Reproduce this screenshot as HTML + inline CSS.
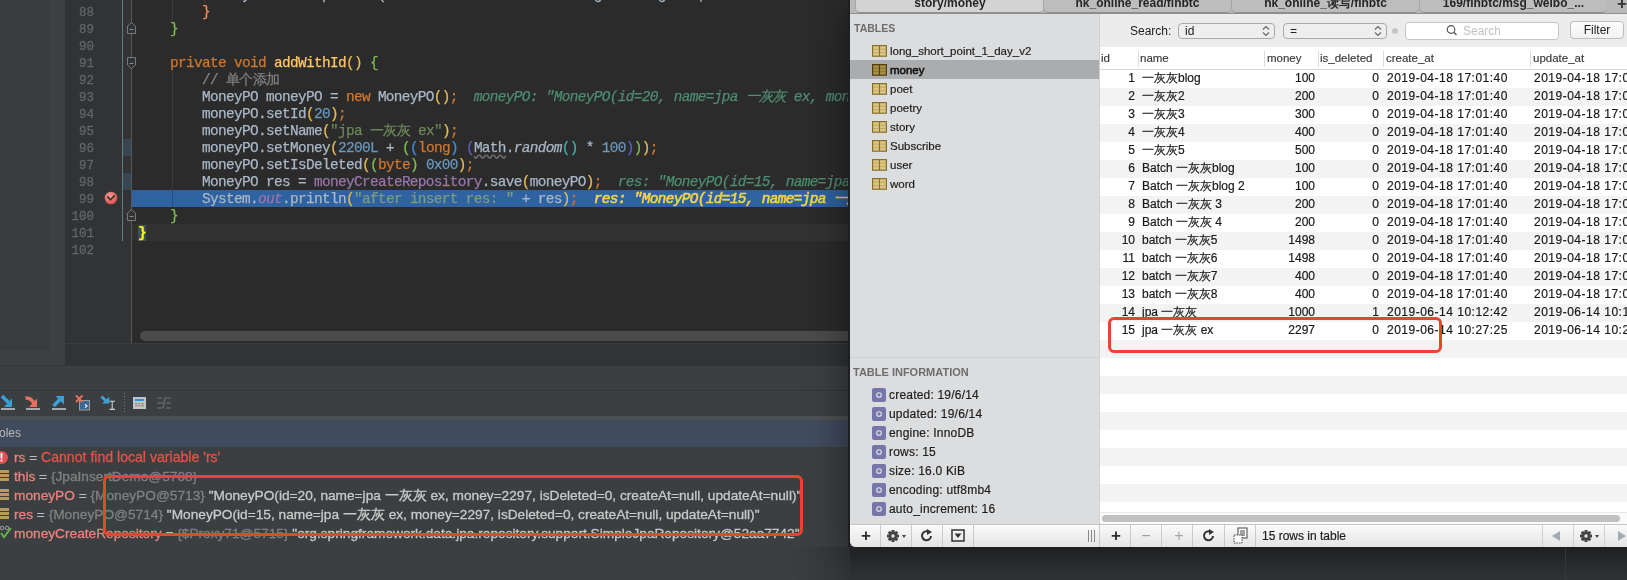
<!DOCTYPE html><html><head><meta charset="utf-8"><style>
*{margin:0;padding:0;box-sizing:border-box}
html,body{width:1627px;height:580px;overflow:hidden;background:#3c3f41;position:relative;font-family:"Liberation Sans",sans-serif}
#root{position:absolute;left:0;top:0;width:1627px;height:580px;will-change:transform}
.a{position:absolute}
#lpanel{left:0;top:0;width:66px;height:365px;background:#3d4042;border-right:1px solid #2f3133}
#lpanel-in{left:0;top:0;width:51px;height:351px;background:#393c3e;border-right:1px solid #3f4244;border-bottom:1px solid #3f4244}
#gutter{left:66px;top:0;width:66px;height:343px;background:#313335}
#editor{left:132px;top:0;width:718px;height:343px;background:#2b2b2b;overflow:hidden}
#below{left:66px;top:343px;width:784px;height:22px;background:#313335;border-top:1px solid #3b3d3f}
.ln{position:absolute;left:66px;width:28px;text-align:right;font-family:"Liberation Mono",monospace;font-size:12.5px;color:#626568;line-height:17px;height:17px;padding-top:2px;-webkit-text-stroke:0.3px}
.code{position:absolute;left:6px;font-family:"Liberation Mono",monospace;font-size:14.4px;letter-spacing:-0.64px;-webkit-text-stroke:0.25px;line-height:17px;height:17px;white-space:pre;color:#a9b7c6}
.kw{color:#cc7832}.fn{color:#ffc66d}.cm{color:#808080}.st{color:#6a8759}.st2{color:#7d9a86}.nu{color:#6897bb}
.pu{color:#9876aa;font-style:italic}.pu2{color:#9876aa}
.it{font-style:italic}
.wavy{text-decoration:underline wavy #707070;text-underline-offset:2px}
.hint{color:#4f8c72;font-style:italic}
.hint2{color:#f0d44a;font-style:italic;-webkit-text-stroke:0.6px}
.b1{color:#e8ba54}.b2{color:#7fbf4d}.b3{color:#f08c50}.b4{color:#3fb2a6}.b6{color:#3d8ed6}.b7{color:#5b5fc7}
.mb{background:#3b514d;color:#ffef28;font-weight:bold}

.vr{left:14px;height:19px;line-height:19px;font-size:13.7px;color:#bbbbbb;white-space:pre;-webkit-text-stroke:0.3px}
.vn{color:#e8837e}.ve{color:#e5524a;font-size:14.1px}.vg{color:#808080}.vw{color:#c9c9c9}

#sq{left:850px;top:0;width:790px;height:547px;background:#ececec;border-bottom-left-radius:6px;overflow:hidden}
.tab{position:absolute;top:-6px;height:19px;padding-top:1.5px;background:#c0c0c0;border-left:1px solid #a6a6a6;border-bottom:1px solid #8f8f8f;border-radius:0 0 5px 5px;font-size:12px;font-weight:bold;color:#262626;text-align:center;line-height:14px;white-space:nowrap;overflow:hidden}
.tbl{position:absolute;left:22px;font-size:11.5px;color:#1e1e1e;height:19px;line-height:19px;white-space:pre;-webkit-text-stroke:0.2px}
.ti{position:absolute;left:22px;font-size:12px;color:#1e1e1e;height:19px;line-height:19px;white-space:pre;-webkit-text-stroke:0.2px;letter-spacing:0.2px}
.row{position:absolute;left:250px;width:540px;height:18px}
.cell{position:absolute;top:0;height:18px;line-height:18px;font-size:12px;color:#1a1a1a;white-space:pre;-webkit-text-stroke:0.2px}
.hd{position:absolute;top:48px;height:21px;line-height:21px;font-size:11.5px;color:#383838;white-space:pre;-webkit-text-stroke:0.15px}
.sep{position:absolute;top:51px;width:1px;height:16px;background:#dcdcdc}
.dt{letter-spacing:0.5px}</style></head><body><div id="root"><div class="a" id="lpanel"></div><div class="a" id="lpanel-in"></div><div class="a" id="gutter"></div><div class="a" id="editor"><div class="a" style="left:0;top:224px;width:718px;height:17px;background:#323232"></div><div class="a" style="left:0;top:190px;width:718px;height:17px;background:#2e62a0"></div><div class="a" style="left:40px;top:71px;width:1px;height:136px;background:#3b3b3b"></div><div class="a" style="left:40px;top:190px;width:1px;height:17px;background:#244e80"></div><div class="a" style="left:40px;top:0px;width:1px;height:20px;background:#3b3b3b"></div><div class="a" style="left:72px;top:0px;width:1px;height:3px;background:#3b3b3b"></div><div class="code" style="top:-13px">            System.out.println(aaaaaaaaaaaaaaaaaaaaaaaaaagaaaaaaaga...;</div><div class="code" style="top:4px">        <span class="b3">}</span></div><div class="code" style="top:21px">    <span class="b2">}</span></div><div class="code" style="top:55px">    <span class="kw">private void </span><span class="fn">addWithId</span><span class="b1">()</span> <span class="b2">{</span></div><div class="code" style="top:72px">        <span class="cm">// 单个添加</span></div><div class="code" style="top:89px">        MoneyPO moneyPO = <span class="kw">new </span>MoneyPO<span class="b1">()</span><span class="kw">;</span>  <span class="hint">moneyPO: "MoneyPO(id=20, name=jpa 一灰灰 ex, money=2297, isDeleted=0, createAt=null, updateAt=null)"</span></div><div class="code" style="top:106px">        moneyPO.setId<span class="b1">(</span><span class="nu">20</span><span class="b1">)</span><span class="kw">;</span></div><div class="code" style="top:123px">        moneyPO.setName<span class="b1">(</span><span class="st">"jpa 一灰灰 ex"</span><span class="b1">)</span><span class="kw">;</span></div><div class="code" style="top:140px">        moneyPO.setMoney<span class="b1">(</span><span class="nu">2200L</span> + <span class="b2">(</span><span class="b6">(</span><span class="kw">long</span><span class="b6">)</span> <span class="b7">(</span><span class="wavy">Math</span>.<span class="it">random</span><span class="b4">()</span> * <span class="nu">100</span><span class="b7">)</span><span class="b2">)</span><span class="b1">)</span><span class="kw">;</span></div><div class="code" style="top:157px">        moneyPO.setIsDeleted<span class="b1">(</span><span class="b2">(</span><span class="kw">byte</span><span class="b2">)</span> <span class="nu">0x00</span><span class="b1">)</span><span class="kw">;</span></div><div class="code" style="top:174px">        MoneyPO res = <span class="pu2">moneyCreateRepository</span>.save<span class="b1">(</span>moneyPO<span class="b1">)</span><span class="kw">;</span>  <span class="hint">res: "MoneyPO(id=15, name=jpa 一灰灰 ex, money=2297, isDeleted=0, createAt=null, updateAt=null)"</span></div><div class="code" style="top:191px">        System.<span class="pu">out</span>.println<span class="b1">(</span><span class="st2">"after insert res: "</span> + res<span class="b1">)</span><span class="kw">;</span>  <span class="hint2">res: "MoneyPO(id=15, name=jpa 一灰灰 ex, money=2297, isDeleted=0, createAt=null, updateAt=null)"</span></div><div class="code" style="top:208px">    <span class="b2">}</span></div><div class="code" style="top:225px"><span class="b1 mb">}</span></div></div><div class="a" id="below"></div><div class="a" style="left:140px;top:331px;width:720px;height:10px;border-radius:5px;background:#494b4d"></div><div class="ln" style="top:3px">88</div><div class="ln" style="top:20px">89</div><div class="ln" style="top:37px">90</div><div class="ln" style="top:54px">91</div><div class="ln" style="top:71px">92</div><div class="ln" style="top:88px">93</div><div class="ln" style="top:105px">94</div><div class="ln" style="top:122px">95</div><div class="ln" style="top:139px">96</div><div class="ln" style="top:156px">97</div><div class="ln" style="top:173px">98</div><div class="ln" style="top:190px">99</div><div class="ln" style="top:207px">100</div><div class="ln" style="top:224px">101</div><div class="ln" style="top:241px">102</div><div class="a" style="left:122px;top:0;width:1px;height:241px;background:#5a7f7c"></div><div class="a" style="left:123px;top:139px;width:8px;height:17px;background:#374650"></div><div class="a" style="left:123px;top:173px;width:8px;height:17px;background:#374650"></div><div class="a" style="left:131px;top:0;width:1px;height:343px;background:#55585a"></div><svg class="a" style="left:127px;top:0" width="10" height="260"><path d="M0.5,33.5 L0.5,26 L4.5,22.5 L8.5,26 L8.5,33.5 Z" fill="#313335" stroke="#77797b" stroke-width="1"/><path d="M2.5,29.5 L6.5,29.5" stroke="#8a8c8e" stroke-width="1"/><path d="M0.5,57.5 L0.5,65 L4.5,68.5 L8.5,65 L8.5,57.5 Z" fill="#313335" stroke="#77797b" stroke-width="1"/><path d="M2.5,63.5 L6.5,63.5" stroke="#8a8c8e" stroke-width="1"/><path d="M0.5,220.5 L0.5,213 L4.5,209.5 L8.5,213 L8.5,220.5 Z" fill="#313335" stroke="#77797b" stroke-width="1"/><path d="M2.5,216.5 L6.5,216.5" stroke="#8a8c8e" stroke-width="1"/></svg><svg class="a" style="left:104px;top:191px" width="14" height="14"><defs><radialGradient id="bp" cx="40%" cy="35%" r="65%"><stop offset="0" stop-color="#f4a09a"/><stop offset="1" stop-color="#d9524c"/></radialGradient></defs><circle cx="7" cy="7" r="6.3" fill="url(#bp)"/><path d="M3.4,5.4 L6.4,8.8 L10.8,4.4" fill="none" stroke="#3d3030" stroke-width="1.6"/></svg><div class="a" style="left:0;top:365px;width:850px;height:25px;background:#3c3f41;border-top:1px solid #333537"></div><div class="a" style="left:0;top:390px;width:850px;height:1px;background:#323436"></div><div class="a" style="left:0;top:391px;width:850px;height:25px;background:#3c3f41"></div><div class="a" style="left:0;top:416px;width:850px;height:4px;background:#4d5052"></div><div class="a" style="left:0;top:420px;width:850px;height:27px;background:#404b5d"></div><div class="a" style="left:-1px;top:424px;height:18px;line-height:18px;font-size:12px;color:#bbbbbb;white-space:pre">oles</div><div class="a" style="left:0;top:447px;width:850px;height:133px;background:#3c3f41"></div><svg class="a" style="left:0;top:449px" width="14" height="90"><circle cx="1.5" cy="8.5" r="6.5" fill="#e0534f"/><rect x="0.6" y="4" width="1.8" height="5.5" fill="#fff"/><rect x="0.6" y="10.6" width="1.8" height="1.8" fill="#fff"/><rect x="0" y="21" width="9" height="3" fill="#b89a5e"/><rect x="0" y="25" width="9" height="3" fill="#b89a5e"/><rect x="0" y="29" width="9" height="3" fill="#b89a5e"/><rect x="0" y="40" width="9" height="3" fill="#b89a5e"/><rect x="0" y="44" width="9" height="3" fill="#b89a5e"/><rect x="0" y="48" width="9" height="3" fill="#b89a5e"/><rect x="0" y="59" width="9" height="3" fill="#b89a5e"/><rect x="0" y="63" width="9" height="3" fill="#b89a5e"/><rect x="0" y="67" width="9" height="3" fill="#b89a5e"/><circle cx="2" cy="79" r="1.8" fill="none" stroke="#aaa" stroke-width="0.9"/><circle cx="7" cy="79" r="1.8" fill="none" stroke="#aaa" stroke-width="0.9"/><path d="M1,84 L4,88 L11,79" fill="none" stroke="#62b543" stroke-width="2"/></svg><div class="a vr" style="top:448px"><span class="vn">rs</span> = <span class="ve">Cannot find local variable 'rs'</span></div><div class="a vr" style="top:467px"><span class="vn">this</span> = <span class="vg">{JpaInsertDemo@5708}</span></div><div class="a vr" style="top:486px"><span class="vn">moneyPO</span> = <span class="vg">{MoneyPO@5713}</span><span class="vw"> "MoneyPO(id=20, name=jpa 一灰灰 ex, money=2297, isDeleted=0, createAt=null, updateAt=null)"</span></div><div class="a vr" style="top:505px"><span class="vn">res</span> = <span class="vg">{MoneyPO@5714}</span><span class="vw"> "MoneyPO(id=15, name=jpa 一灰灰 ex, money=2297, isDeleted=0, createAt=null, updateAt=null)"</span></div><div class="a vr" style="top:524px"><span class="vn">moneyCreateRepository</span> = <span class="vg">{$Proxy71@5715}</span><span class="vw"> "org.springframework.data.jpa.repository.support.SimpleJpaRepository@52aa7742"</span></div><div class="a" style="left:103px;top:475px;width:700px;height:61px;border:3px solid #e8442e;border-radius:6px"></div><svg class="a" style="left:0;top:391px" width="180" height="25"><path d="M2,5 L8.5,11.5" stroke="#3d9fd8" stroke-width="3.6" fill="none"/><path d="M4,16 L12,16 L12,7.5 Z" fill="#3d9fd8"/><rect x="1" y="17" width="14" height="2" fill="#a8a8a8"/><path d="M25.5,7 Q31,6.5 34,12.5" stroke="#e8705e" stroke-width="3.4" fill="none"/><path d="M29,16 L37,16 L37,7.5 Z" fill="#e8705e"/><rect x="26" y="17" width="14" height="2" fill="#a8a8a8"/><path d="M53.5,15 L60,8.5" stroke="#3d9fd8" stroke-width="3.6" fill="none"/><path d="M55.5,5 L64,5 L64,13.5 Z" fill="#3d9fd8"/><rect x="52" y="17" width="14" height="2" fill="#a8a8a8"/><rect x="79.5" y="9.5" width="10" height="9.5" fill="#3a6890" stroke="#9a9a9a" stroke-width="1"/><path d="M85,13.5 L87,15 L85,16.5" stroke="#fff" stroke-width="1.1" fill="none"/><path d="M76,4.5 L82.5,11 M82.5,4.5 L76,11" stroke="#e8705e" stroke-width="1.8"/><path d="M101.5,5.5 L106.5,10.5" stroke="#3d9fd8" stroke-width="3" fill="none"/><path d="M102,12.5 L109.3,12.5 L109.3,5.8 Z" fill="#3d9fd8"/><path d="M109.5,10.3 L115,10.3 M112.2,10.3 L112.2,18.4 M109.5,18.4 L115,18.4" stroke="#d0d0d0" stroke-width="1.1"/><rect x="124" y="2" width="1" height="1" fill="#7a7a7a"/><rect x="124" y="5" width="1" height="1" fill="#7a7a7a"/><rect x="124" y="8" width="1" height="1" fill="#7a7a7a"/><rect x="124" y="11" width="1" height="1" fill="#7a7a7a"/><rect x="124" y="14" width="1" height="1" fill="#7a7a7a"/><rect x="124" y="17" width="1" height="1" fill="#7a7a7a"/><rect x="124" y="20" width="1" height="1" fill="#7a7a7a"/><rect x="133" y="6" width="13" height="12" fill="#c0c4c8"/><rect x="135" y="8" width="9" height="2" fill="#3a8fd0"/><rect x="135.2" y="12" width="2" height="1.2" fill="#8a8a8a"/><rect x="138.3" y="12" width="2" height="1.2" fill="#8a8a8a"/><rect x="141.3" y="12" width="2.6" height="1.2" fill="#c87a7a"/><rect x="135.2" y="14" width="2" height="1.2" fill="#8a8a8a"/><rect x="138.3" y="14" width="2" height="1.2" fill="#8a8a8a"/><rect x="141.3" y="14" width="2.6" height="1.4" fill="#4cb84c"/><path d="M157,7 L162,7 M157,12 L163,12 M157,17 L163,17 M166,7 L171,7 M166,12 L171,12 M166,17 L171,17 M163,17 L165,7 L166,7" stroke="#5f6163" stroke-width="1.7" fill="none"/></svg><div class="a" style="left:850px;top:0;width:800px;height:547px;border-bottom-left-radius:6px;box-shadow:0 10px 36px 4px rgba(0,0,0,.45)"></div><div class="a" style="left:850px;top:547px;width:777px;height:33px;background:linear-gradient(#1e1f21,#2b2c2f 60%,#303134)"></div><div class="a" style="left:1565px;top:547px;width:1px;height:33px;background:#36373a"></div><div class="a" style="left:790px;top:547px;width:60px;height:33px;background:linear-gradient(to right,rgba(31,32,34,0),rgba(31,32,34,.35))"></div><div class="a" id="sq"><div class="a" style="left:0;top:0;width:790px;height:14px;background:#b9b9b9;border-bottom:1px solid #8d8d8d"></div><div class="tab" style="left:5px;width:189px;background:#d3d3d3">story/money</div><div class="tab" style="left:193px;width:188px;background:#bdbdbd">hk_online_read/finbtc</div><div class="tab" style="left:381px;width:188px;background:#bdbdbd">hk_online_读写/finbtc</div><div class="tab" style="left:569px;width:188px;background:#bdbdbd">169/finbtc/msg_weibo_...</div><div class="a" style="left:767px;top:-6px;height:18px;font-size:17px;font-weight:bold;color:#333">+</div><div class="a" style="left:0;top:14px;width:249px;height:510px;background:#dcdddf"></div><div class="a" style="left:249px;top:14px;width:1px;height:510px;background:#d2d2d4"></div><div class="a" style="left:4px;top:21px;font-size:10.5px;font-weight:bold;color:#6d6d6d;line-height:14px">TABLES</div><svg class="a" style="left:22px;top:45px" width="16" height="13"><defs><linearGradient id="g0" x1="0" y1="0" x2="0" y2="1"><stop offset="0" stop-color="#dcc47c"/><stop offset="1" stop-color="#dcc47c" stop-opacity="0.85"/></linearGradient></defs><rect x="0.6" y="0.6" width="13.8" height="10.6" fill="url(#g0)" stroke="#86702e" stroke-width="1.2"/><path d="M7.5,0.6 V11.2" stroke="#86702e" stroke-width="1.1"/><path d="M1,4.2 H14 M1,7.7 H14" stroke="#86702e" stroke-opacity="0.35" stroke-width="0.9"/></svg><div class="tbl" style="left:40px;top:42px;">long_short_point_1_day_v2</div><div class="a" style="left:0;top:60px;width:249px;height:18.5px;background:#abacae"></div><svg class="a" style="left:22px;top:64px" width="16" height="13"><defs><linearGradient id="g1" x1="0" y1="0" x2="0" y2="1"><stop offset="0" stop-color="#a88c3c"/><stop offset="1" stop-color="#a88c3c" stop-opacity="0.85"/></linearGradient></defs><rect x="0.6" y="0.6" width="13.8" height="10.6" fill="url(#g1)" stroke="#4e3c12" stroke-width="1.2"/><path d="M7.5,0.6 V11.2" stroke="#4e3c12" stroke-width="1.1"/><path d="M1,4.2 H14 M1,7.7 H14" stroke="#4e3c12" stroke-opacity="0.35" stroke-width="0.9"/></svg><div class="tbl" style="left:40px;top:61px;-webkit-text-stroke:0.55px;color:#111">money</div><svg class="a" style="left:22px;top:83px" width="16" height="13"><defs><linearGradient id="g2" x1="0" y1="0" x2="0" y2="1"><stop offset="0" stop-color="#dcc47c"/><stop offset="1" stop-color="#dcc47c" stop-opacity="0.85"/></linearGradient></defs><rect x="0.6" y="0.6" width="13.8" height="10.6" fill="url(#g2)" stroke="#86702e" stroke-width="1.2"/><path d="M7.5,0.6 V11.2" stroke="#86702e" stroke-width="1.1"/><path d="M1,4.2 H14 M1,7.7 H14" stroke="#86702e" stroke-opacity="0.35" stroke-width="0.9"/></svg><div class="tbl" style="left:40px;top:80px;">poet</div><svg class="a" style="left:22px;top:102px" width="16" height="13"><defs><linearGradient id="g3" x1="0" y1="0" x2="0" y2="1"><stop offset="0" stop-color="#dcc47c"/><stop offset="1" stop-color="#dcc47c" stop-opacity="0.85"/></linearGradient></defs><rect x="0.6" y="0.6" width="13.8" height="10.6" fill="url(#g3)" stroke="#86702e" stroke-width="1.2"/><path d="M7.5,0.6 V11.2" stroke="#86702e" stroke-width="1.1"/><path d="M1,4.2 H14 M1,7.7 H14" stroke="#86702e" stroke-opacity="0.35" stroke-width="0.9"/></svg><div class="tbl" style="left:40px;top:99px;">poetry</div><svg class="a" style="left:22px;top:121px" width="16" height="13"><defs><linearGradient id="g4" x1="0" y1="0" x2="0" y2="1"><stop offset="0" stop-color="#dcc47c"/><stop offset="1" stop-color="#dcc47c" stop-opacity="0.85"/></linearGradient></defs><rect x="0.6" y="0.6" width="13.8" height="10.6" fill="url(#g4)" stroke="#86702e" stroke-width="1.2"/><path d="M7.5,0.6 V11.2" stroke="#86702e" stroke-width="1.1"/><path d="M1,4.2 H14 M1,7.7 H14" stroke="#86702e" stroke-opacity="0.35" stroke-width="0.9"/></svg><div class="tbl" style="left:40px;top:118px;">story</div><svg class="a" style="left:22px;top:140px" width="16" height="13"><defs><linearGradient id="g5" x1="0" y1="0" x2="0" y2="1"><stop offset="0" stop-color="#dcc47c"/><stop offset="1" stop-color="#dcc47c" stop-opacity="0.85"/></linearGradient></defs><rect x="0.6" y="0.6" width="13.8" height="10.6" fill="url(#g5)" stroke="#86702e" stroke-width="1.2"/><path d="M7.5,0.6 V11.2" stroke="#86702e" stroke-width="1.1"/><path d="M1,4.2 H14 M1,7.7 H14" stroke="#86702e" stroke-opacity="0.35" stroke-width="0.9"/></svg><div class="tbl" style="left:40px;top:137px;">Subscribe</div><svg class="a" style="left:22px;top:159px" width="16" height="13"><defs><linearGradient id="g6" x1="0" y1="0" x2="0" y2="1"><stop offset="0" stop-color="#dcc47c"/><stop offset="1" stop-color="#dcc47c" stop-opacity="0.85"/></linearGradient></defs><rect x="0.6" y="0.6" width="13.8" height="10.6" fill="url(#g6)" stroke="#86702e" stroke-width="1.2"/><path d="M7.5,0.6 V11.2" stroke="#86702e" stroke-width="1.1"/><path d="M1,4.2 H14 M1,7.7 H14" stroke="#86702e" stroke-opacity="0.35" stroke-width="0.9"/></svg><div class="tbl" style="left:40px;top:156px;">user</div><svg class="a" style="left:22px;top:178px" width="16" height="13"><defs><linearGradient id="g7" x1="0" y1="0" x2="0" y2="1"><stop offset="0" stop-color="#dcc47c"/><stop offset="1" stop-color="#dcc47c" stop-opacity="0.85"/></linearGradient></defs><rect x="0.6" y="0.6" width="13.8" height="10.6" fill="url(#g7)" stroke="#86702e" stroke-width="1.2"/><path d="M7.5,0.6 V11.2" stroke="#86702e" stroke-width="1.1"/><path d="M1,4.2 H14 M1,7.7 H14" stroke="#86702e" stroke-opacity="0.35" stroke-width="0.9"/></svg><div class="tbl" style="left:40px;top:175px;">word</div><div class="a" style="left:0;top:357px;width:249px;height:1px;background:#cfcfcf"></div><div class="a" style="left:3px;top:365px;font-size:11px;font-weight:bold;color:#6d6d6d;line-height:14px">TABLE INFORMATION</div><svg class="a" style="left:22px;top:388px" width="14" height="14"><rect x="0" y="0" width="14" height="14" rx="2" fill="#7776a8"/><circle cx="7" cy="7" r="2.3" fill="none" stroke="#e4e4f0" stroke-width="1.1"/></svg><div class="ti" style="left:39px;top:386px">created: 19/6/14</div><svg class="a" style="left:22px;top:407px" width="14" height="14"><rect x="0" y="0" width="14" height="14" rx="2" fill="#7776a8"/><circle cx="7" cy="7" r="2.3" fill="none" stroke="#e4e4f0" stroke-width="1.1"/></svg><div class="ti" style="left:39px;top:405px">updated: 19/6/14</div><svg class="a" style="left:22px;top:426px" width="14" height="14"><rect x="0" y="0" width="14" height="14" rx="2" fill="#7776a8"/><circle cx="7" cy="7" r="2.3" fill="none" stroke="#e4e4f0" stroke-width="1.1"/></svg><div class="ti" style="left:39px;top:424px">engine: InnoDB</div><svg class="a" style="left:22px;top:445px" width="14" height="14"><rect x="0" y="0" width="14" height="14" rx="2" fill="#7776a8"/><circle cx="7" cy="7" r="2.3" fill="none" stroke="#e4e4f0" stroke-width="1.1"/></svg><div class="ti" style="left:39px;top:443px">rows: 15</div><svg class="a" style="left:22px;top:464px" width="14" height="14"><rect x="0" y="0" width="14" height="14" rx="2" fill="#7776a8"/><circle cx="7" cy="7" r="2.3" fill="none" stroke="#e4e4f0" stroke-width="1.1"/></svg><div class="ti" style="left:39px;top:462px">size: 16.0 KiB</div><svg class="a" style="left:22px;top:483px" width="14" height="14"><rect x="0" y="0" width="14" height="14" rx="2" fill="#7776a8"/><circle cx="7" cy="7" r="2.3" fill="none" stroke="#e4e4f0" stroke-width="1.1"/></svg><div class="ti" style="left:39px;top:481px">encoding: utf8mb4</div><svg class="a" style="left:22px;top:502px" width="14" height="14"><rect x="0" y="0" width="14" height="14" rx="2" fill="#7776a8"/><circle cx="7" cy="7" r="2.3" fill="none" stroke="#e4e4f0" stroke-width="1.1"/></svg><div class="ti" style="left:39px;top:500px">auto_increment: 16</div><div class="a" style="left:0;top:524px;width:790px;height:23px;background:linear-gradient(#fafafa,#e4e4e4);border-top:1px solid #c6c6c6"></div><div class="a" style="left:30px;top:525px;width:1px;height:22px;background:#c9c9c9"></div><div class="a" style="left:61px;top:525px;width:1px;height:22px;background:#c9c9c9"></div><div class="a" style="left:92px;top:525px;width:1px;height:22px;background:#c9c9c9"></div><div class="a" style="left:123px;top:525px;width:1px;height:22px;background:#c9c9c9"></div><div class="a" style="left:249px;top:525px;width:1px;height:22px;background:#c9c9c9"></div><div class="a" style="left:280px;top:525px;width:1px;height:22px;background:#c9c9c9"></div><div class="a" style="left:311px;top:525px;width:1px;height:22px;background:#c9c9c9"></div><div class="a" style="left:342px;top:525px;width:1px;height:22px;background:#c9c9c9"></div><div class="a" style="left:374px;top:525px;width:1px;height:22px;background:#c9c9c9"></div><div class="a" style="left:8px;top:525px;width:16px;height:22px;font-size:17px;font-weight:bold;color:#2e2e2e;text-align:center;line-height:22px">+</div><div class="a" style="left:258px;top:525px;width:16px;height:22px;font-size:17px;font-weight:bold;color:#2e2e2e;text-align:center;line-height:22px">+</div><div class="a" style="left:288px;top:525px;width:16px;height:22px;font-size:16px;color:#9a9a9a;text-align:center;line-height:22px">−</div><div class="a" style="left:321px;top:525px;width:16px;height:22px;font-size:16px;color:#a8a8a8;text-align:center;line-height:22px">+</div><div class="a" style="left:238px;top:530px;width:7px;height:12px;border-left:1px solid #888;border-right:1px solid #888"></div><div class="a" style="left:241px;top:530px;width:1px;height:12px;background:#888"></div><svg class="a" style="left:37px;top:529px" width="22" height="14"><g transform="translate(6,7)"><rect x="-1.5" y="-6" width="3" height="3" fill="#444" transform="rotate(0)"/><rect x="-1.5" y="-6" width="3" height="3" fill="#444" transform="rotate(45)"/><rect x="-1.5" y="-6" width="3" height="3" fill="#444" transform="rotate(90)"/><rect x="-1.5" y="-6" width="3" height="3" fill="#444" transform="rotate(135)"/><rect x="-1.5" y="-6" width="3" height="3" fill="#444" transform="rotate(180)"/><rect x="-1.5" y="-6" width="3" height="3" fill="#444" transform="rotate(225)"/><rect x="-1.5" y="-6" width="3" height="3" fill="#444" transform="rotate(270)"/><rect x="-1.5" y="-6" width="3" height="3" fill="#444" transform="rotate(315)"/><circle r="4.2" fill="#444"/><circle r="1.7" fill="#eaeaea"/></g><path d="M15,6 L19,6 L17,9 Z" fill="#444"/></svg><svg class="a" style="left:730px;top:529px" width="22" height="14"><g transform="translate(6,7)"><rect x="-1.5" y="-6" width="3" height="3" fill="#444" transform="rotate(0)"/><rect x="-1.5" y="-6" width="3" height="3" fill="#444" transform="rotate(45)"/><rect x="-1.5" y="-6" width="3" height="3" fill="#444" transform="rotate(90)"/><rect x="-1.5" y="-6" width="3" height="3" fill="#444" transform="rotate(135)"/><rect x="-1.5" y="-6" width="3" height="3" fill="#444" transform="rotate(180)"/><rect x="-1.5" y="-6" width="3" height="3" fill="#444" transform="rotate(225)"/><rect x="-1.5" y="-6" width="3" height="3" fill="#444" transform="rotate(270)"/><rect x="-1.5" y="-6" width="3" height="3" fill="#444" transform="rotate(315)"/><circle r="4.2" fill="#444"/><circle r="1.7" fill="#eaeaea"/></g><path d="M15,6 L19,6 L17,9 Z" fill="#444"/></svg><svg class="a" style="left:70px;top:529px" width="14" height="14"><path d="M11,7 A4.5,4.5 0 1 1 8.5,2.8" fill="none" stroke="#333" stroke-width="2"/><path d="M7,0 L12,3 L7,6 Z" fill="#333"/></svg><svg class="a" style="left:352px;top:529px" width="14" height="14"><path d="M11,7 A4.5,4.5 0 1 1 8.5,2.8" fill="none" stroke="#333" stroke-width="2"/><path d="M7,0 L12,3 L7,6 Z" fill="#333"/></svg><svg class="a" style="left:101px;top:529px" width="14" height="14"><rect x="1" y="1" width="12" height="11" fill="none" stroke="#333" stroke-width="1.5"/><path d="M3.5,4.5 L10.5,4.5 L7,9 Z" fill="#333"/></svg><svg class="a" style="left:383px;top:527px" width="16" height="18"><rect x="5" y="1" width="9" height="10" fill="#fff" stroke="#444"/><path d="M7,4 H12 M7,6 H12 M7,8 H12" stroke="#444"/><rect x="1" y="8" width="8" height="8" fill="#fff" stroke="#444" stroke-dasharray="1.5 1"/></svg><div class="a" style="left:405px;top:524px;width:1px;height:23px;background:#c9c9c9"></div><div class="a" style="left:412px;top:526px;height:20px;line-height:20px;font-size:12px;color:#1e1e1e;-webkit-text-stroke:0.2px">15 rows in table</div><div class="a" style="left:692px;top:525px;width:1px;height:22px;background:#d0d0d0"></div><div class="a" style="left:723px;top:525px;width:1px;height:22px;background:#d0d0d0"></div><div class="a" style="left:754px;top:525px;width:1px;height:22px;background:#d0d0d0"></div><svg class="a" style="left:700px;top:530px" width="12" height="12"><path d="M10,1 L10,11 L2,6 Z" fill="#a3aab4"/></svg><svg class="a" style="left:766px;top:530px" width="12" height="12"><path d="M2,1 L2,11 L10,6 Z" fill="#a3aab4"/></svg><div class="a" style="left:250px;top:14px;width:540px;height:34px;background:#ececec;border-bottom:1px solid #d8d8d8"></div><div class="a" style="left:280px;top:23px;font-size:12px;color:#222;line-height:16px">Search:</div><div class="a" style="left:328px;top:23px;width:97px;height:16px;background:#eeeeee;border:1px solid #aaaaaa;border-radius:4px;font-size:12px;color:#222;line-height:15px;padding-left:6px">id</div><svg class="a" style="left:411px;top:25px" width="10" height="12"><path d="M2,4.5 L5,1.5 L8,4.5 M2,7.5 L5,10.5 L8,7.5" fill="none" stroke="#666" stroke-width="1.1"/></svg><div class="a" style="left:433px;top:23px;width:104px;height:16px;background:#eeeeee;border:1px solid #aaaaaa;border-radius:4px;font-size:12px;color:#222;line-height:15px;padding-left:6px">=</div><svg class="a" style="left:523px;top:25px" width="10" height="12"><path d="M2,4.5 L5,1.5 L8,4.5 M2,7.5 L5,10.5 L8,7.5" fill="none" stroke="#666" stroke-width="1.1"/></svg><div class="a" style="left:542px;top:28px;width:6px;height:6px;border-radius:3px;background:#c6c6c6"></div><div class="a" style="left:555px;top:22px;width:154px;height:18px;background:#fff;border:1px solid #c6c6c6;border-radius:4px"></div><svg class="a" style="left:596px;top:24px" width="12" height="13"><circle cx="5" cy="5.5" r="3.8" fill="none" stroke="#555" stroke-width="1.2"/><path d="M7.8,8.3 L10.5,11" stroke="#555" stroke-width="1.3"/></svg><div class="a" style="left:613px;top:23px;font-size:12px;color:#c2c2c2;line-height:17px">Search</div><div class="a" style="left:720px;top:21px;width:54px;height:18px;background:linear-gradient(#fdfdfd,#f1f1f1);border:1px solid #bcbcbc;border-radius:4px;font-size:12px;color:#222;line-height:16px;text-align:center">Filter</div><div class="a" style="left:250px;top:47px;width:540px;height:477px;background:#fff"></div><div class="a" style="left:250px;top:69px;width:540px;height:1px;background:#d6d6d6"></div><div class="hd" style="left:251px">id</div><div class="hd" style="left:290px">name</div><div class="hd" style="left:417px">money</div><div class="hd" style="left:470px">is_deleted</div><div class="hd" style="left:536px">create_at</div><div class="hd" style="left:683px">update_at</div><div class="sep" style="left:288px"></div><div class="sep" style="left:414px"></div><div class="sep" style="left:468px"></div><div class="sep" style="left:533px"></div><div class="sep" style="left:680px"></div><div class="a" style="left:250px;top:70px;width:540px;height:18px;background:#ffffff"></div><div class="a" style="left:250px;top:88px;width:540px;height:18px;background:#f3f3f3"></div><div class="a" style="left:250px;top:106px;width:540px;height:18px;background:#ffffff"></div><div class="a" style="left:250px;top:124px;width:540px;height:18px;background:#f3f3f3"></div><div class="a" style="left:250px;top:142px;width:540px;height:18px;background:#ffffff"></div><div class="a" style="left:250px;top:160px;width:540px;height:18px;background:#f3f3f3"></div><div class="a" style="left:250px;top:178px;width:540px;height:18px;background:#ffffff"></div><div class="a" style="left:250px;top:196px;width:540px;height:18px;background:#f3f3f3"></div><div class="a" style="left:250px;top:214px;width:540px;height:18px;background:#ffffff"></div><div class="a" style="left:250px;top:232px;width:540px;height:18px;background:#f3f3f3"></div><div class="a" style="left:250px;top:250px;width:540px;height:18px;background:#ffffff"></div><div class="a" style="left:250px;top:268px;width:540px;height:18px;background:#f3f3f3"></div><div class="a" style="left:250px;top:286px;width:540px;height:18px;background:#ffffff"></div><div class="a" style="left:250px;top:304px;width:540px;height:18px;background:#f3f3f3"></div><div class="a" style="left:250px;top:322px;width:540px;height:18px;background:#ffffff"></div><div class="a" style="left:250px;top:340px;width:540px;height:18px;background:#f3f3f3"></div><div class="a" style="left:250px;top:358px;width:540px;height:18px;background:#ffffff"></div><div class="a" style="left:250px;top:376px;width:540px;height:18px;background:#f3f3f3"></div><div class="a" style="left:250px;top:394px;width:540px;height:18px;background:#ffffff"></div><div class="a" style="left:250px;top:412px;width:540px;height:18px;background:#f3f3f3"></div><div class="a" style="left:250px;top:430px;width:540px;height:18px;background:#ffffff"></div><div class="a" style="left:250px;top:448px;width:540px;height:18px;background:#f3f3f3"></div><div class="a" style="left:250px;top:466px;width:540px;height:18px;background:#ffffff"></div><div class="a" style="left:250px;top:484px;width:540px;height:18px;background:#f3f3f3"></div><div class="a" style="left:250px;top:502px;width:540px;height:10px;background:#ffffff"></div><div class="cell" style="left:250px;top:69px;width:35px;text-align:right">1</div><div class="cell" style="left:292px;top:69px">一灰灰blog</div><div class="cell" style="left:414px;top:69px;width:51px;text-align:right">100</div><div class="cell" style="left:470px;top:69px;width:59px;text-align:right">0</div><div class="cell dt" style="left:537px;top:69px">2019-04-18 17:01:40</div><div class="cell dt" style="left:684px;top:69px">2019-04-18 17:01:40</div><div class="cell" style="left:250px;top:87px;width:35px;text-align:right">2</div><div class="cell" style="left:292px;top:87px">一灰灰2</div><div class="cell" style="left:414px;top:87px;width:51px;text-align:right">200</div><div class="cell" style="left:470px;top:87px;width:59px;text-align:right">0</div><div class="cell dt" style="left:537px;top:87px">2019-04-18 17:01:40</div><div class="cell dt" style="left:684px;top:87px">2019-04-18 17:01:40</div><div class="cell" style="left:250px;top:105px;width:35px;text-align:right">3</div><div class="cell" style="left:292px;top:105px">一灰灰3</div><div class="cell" style="left:414px;top:105px;width:51px;text-align:right">300</div><div class="cell" style="left:470px;top:105px;width:59px;text-align:right">0</div><div class="cell dt" style="left:537px;top:105px">2019-04-18 17:01:40</div><div class="cell dt" style="left:684px;top:105px">2019-04-18 17:01:40</div><div class="cell" style="left:250px;top:123px;width:35px;text-align:right">4</div><div class="cell" style="left:292px;top:123px">一灰灰4</div><div class="cell" style="left:414px;top:123px;width:51px;text-align:right">400</div><div class="cell" style="left:470px;top:123px;width:59px;text-align:right">0</div><div class="cell dt" style="left:537px;top:123px">2019-04-18 17:01:40</div><div class="cell dt" style="left:684px;top:123px">2019-04-18 17:01:40</div><div class="cell" style="left:250px;top:141px;width:35px;text-align:right">5</div><div class="cell" style="left:292px;top:141px">一灰灰5</div><div class="cell" style="left:414px;top:141px;width:51px;text-align:right">500</div><div class="cell" style="left:470px;top:141px;width:59px;text-align:right">0</div><div class="cell dt" style="left:537px;top:141px">2019-04-18 17:01:40</div><div class="cell dt" style="left:684px;top:141px">2019-04-18 17:01:40</div><div class="cell" style="left:250px;top:159px;width:35px;text-align:right">6</div><div class="cell" style="left:292px;top:159px">Batch 一灰灰blog</div><div class="cell" style="left:414px;top:159px;width:51px;text-align:right">100</div><div class="cell" style="left:470px;top:159px;width:59px;text-align:right">0</div><div class="cell dt" style="left:537px;top:159px">2019-04-18 17:01:40</div><div class="cell dt" style="left:684px;top:159px">2019-04-18 17:01:40</div><div class="cell" style="left:250px;top:177px;width:35px;text-align:right">7</div><div class="cell" style="left:292px;top:177px">Batch 一灰灰blog 2</div><div class="cell" style="left:414px;top:177px;width:51px;text-align:right">100</div><div class="cell" style="left:470px;top:177px;width:59px;text-align:right">0</div><div class="cell dt" style="left:537px;top:177px">2019-04-18 17:01:40</div><div class="cell dt" style="left:684px;top:177px">2019-04-18 17:01:40</div><div class="cell" style="left:250px;top:195px;width:35px;text-align:right">8</div><div class="cell" style="left:292px;top:195px">Batch 一灰灰 3</div><div class="cell" style="left:414px;top:195px;width:51px;text-align:right">200</div><div class="cell" style="left:470px;top:195px;width:59px;text-align:right">0</div><div class="cell dt" style="left:537px;top:195px">2019-04-18 17:01:40</div><div class="cell dt" style="left:684px;top:195px">2019-04-18 17:01:40</div><div class="cell" style="left:250px;top:213px;width:35px;text-align:right">9</div><div class="cell" style="left:292px;top:213px">Batch 一灰灰 4</div><div class="cell" style="left:414px;top:213px;width:51px;text-align:right">200</div><div class="cell" style="left:470px;top:213px;width:59px;text-align:right">0</div><div class="cell dt" style="left:537px;top:213px">2019-04-18 17:01:40</div><div class="cell dt" style="left:684px;top:213px">2019-04-18 17:01:40</div><div class="cell" style="left:250px;top:231px;width:35px;text-align:right">10</div><div class="cell" style="left:292px;top:231px">batch 一灰灰5</div><div class="cell" style="left:414px;top:231px;width:51px;text-align:right">1498</div><div class="cell" style="left:470px;top:231px;width:59px;text-align:right">0</div><div class="cell dt" style="left:537px;top:231px">2019-04-18 17:01:40</div><div class="cell dt" style="left:684px;top:231px">2019-04-18 17:01:40</div><div class="cell" style="left:250px;top:249px;width:35px;text-align:right">11</div><div class="cell" style="left:292px;top:249px">batch 一灰灰6</div><div class="cell" style="left:414px;top:249px;width:51px;text-align:right">1498</div><div class="cell" style="left:470px;top:249px;width:59px;text-align:right">0</div><div class="cell dt" style="left:537px;top:249px">2019-04-18 17:01:40</div><div class="cell dt" style="left:684px;top:249px">2019-04-18 17:01:40</div><div class="cell" style="left:250px;top:267px;width:35px;text-align:right">12</div><div class="cell" style="left:292px;top:267px">batch 一灰灰7</div><div class="cell" style="left:414px;top:267px;width:51px;text-align:right">400</div><div class="cell" style="left:470px;top:267px;width:59px;text-align:right">0</div><div class="cell dt" style="left:537px;top:267px">2019-04-18 17:01:40</div><div class="cell dt" style="left:684px;top:267px">2019-04-18 17:01:40</div><div class="cell" style="left:250px;top:285px;width:35px;text-align:right">13</div><div class="cell" style="left:292px;top:285px">batch 一灰灰8</div><div class="cell" style="left:414px;top:285px;width:51px;text-align:right">400</div><div class="cell" style="left:470px;top:285px;width:59px;text-align:right">0</div><div class="cell dt" style="left:537px;top:285px">2019-04-18 17:01:40</div><div class="cell dt" style="left:684px;top:285px">2019-04-18 17:01:40</div><div class="cell" style="left:250px;top:303px;width:35px;text-align:right">14</div><div class="cell" style="left:292px;top:303px">jpa 一灰灰</div><div class="cell" style="left:414px;top:303px;width:51px;text-align:right">1000</div><div class="cell" style="left:470px;top:303px;width:59px;text-align:right">1</div><div class="cell dt" style="left:537px;top:303px">2019-06-14 10:12:42</div><div class="cell dt" style="left:684px;top:303px">2019-06-14 10:12:42</div><div class="cell" style="left:250px;top:321px;width:35px;text-align:right">15</div><div class="cell" style="left:292px;top:321px">jpa 一灰灰 ex</div><div class="cell" style="left:414px;top:321px;width:51px;text-align:right">2297</div><div class="cell" style="left:470px;top:321px;width:59px;text-align:right">0</div><div class="cell dt" style="left:537px;top:321px">2019-06-14 10:27:25</div><div class="cell dt" style="left:684px;top:321px">2019-06-14 10:27:25</div><div class="a" style="left:250px;top:512px;width:540px;height:12px;background:#fafafa;border-top:1px solid #e8e8e8"></div><div class="a" style="left:252px;top:515px;width:518px;height:7px;border-radius:4px;background:#c1c1c1"></div><div class="a" style="left:257.5px;top:317px;width:334px;height:35.5px;border:3.3px solid #e8442e;border-radius:6px"></div></div><div class="a" style="left:848px;top:0;width:2px;height:547px;background:#1e1f20"></div></div></body></html>
